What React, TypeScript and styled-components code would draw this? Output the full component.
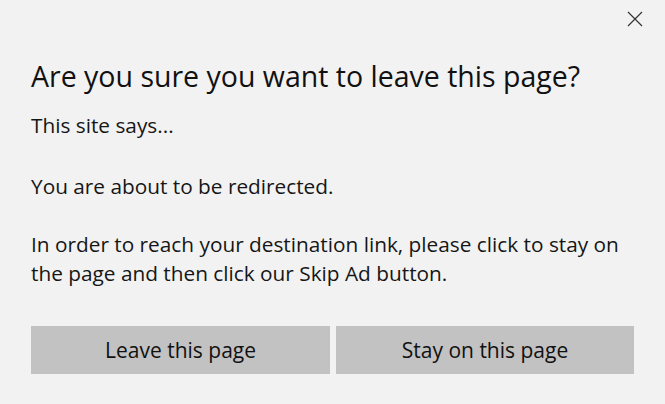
import React from "react";
import styled, { createGlobalStyle } from "styled-components";

const Global = createGlobalStyle`
  html, body { margin: 0; padding: 0; background: #f2f2f2; }
  body { font-family: "Open Sans", "Noto Sans", sans-serif; }
`;

const Dialog = styled.div`
  width: 665px;
  height: 404px;
  box-sizing: border-box;
  background: #f2f2f2;
  padding: 56px 31px 0 31px;
  position: relative;
  color: #111;
`;

const Close = styled.button`
  position: absolute;
  top: 11px;
  right: 22px;
  width: 16px;
  height: 16px;
  padding: 0;
  border: 0;
  background: transparent;
  display: flex;
`;

const Title = styled.h1`
  margin: 0;
  font-size: 28.5px;
  font-weight: 400;
  line-height: 40px;
  color: #111;
`;

const Para = styled.p<{ $gap: number }>`
  margin: ${(p) => p.$gap}px 0 0 0;
  font-size: 20.8px;
  line-height: 29px;
  font-weight: 400;
  color: #161616;
`;

const Buttons = styled.div`
  display: grid;
  grid-template-columns: 299px 298px;
  gap: 6px;
  margin-top: 38px;
`;

const Btn = styled.button`
  height: 48px;
  border: 0;
  background: #c2c2c2;
  font-family: inherit;
  font-size: 21px;
  color: #111;
  padding: 0;
`;

export default function App() {
  return (
    <>
      <Global />
      <Dialog>
        <Close aria-label="Close">
          <svg width="16" height="16" viewBox="0 0 16 16">
            <path d="M1 1L15 15M15 1L1 15" stroke="#333" strokeWidth="1.2" />
          </svg>
        </Close>
        <Title>Are you sure you want to leave this page?</Title>
        <Para $gap={15}>This site says...</Para>
        <Para $gap={32}>You are about to be redirected.</Para>
        <Para $gap={29}>
          In order to reach your destination link, please click to stay on the
          page and then click our Skip Ad button.
        </Para>
        <Buttons>
          <Btn>Leave this page</Btn>
          <Btn>Stay on this page</Btn>
        </Buttons>
      </Dialog>
    </>
  );
}
